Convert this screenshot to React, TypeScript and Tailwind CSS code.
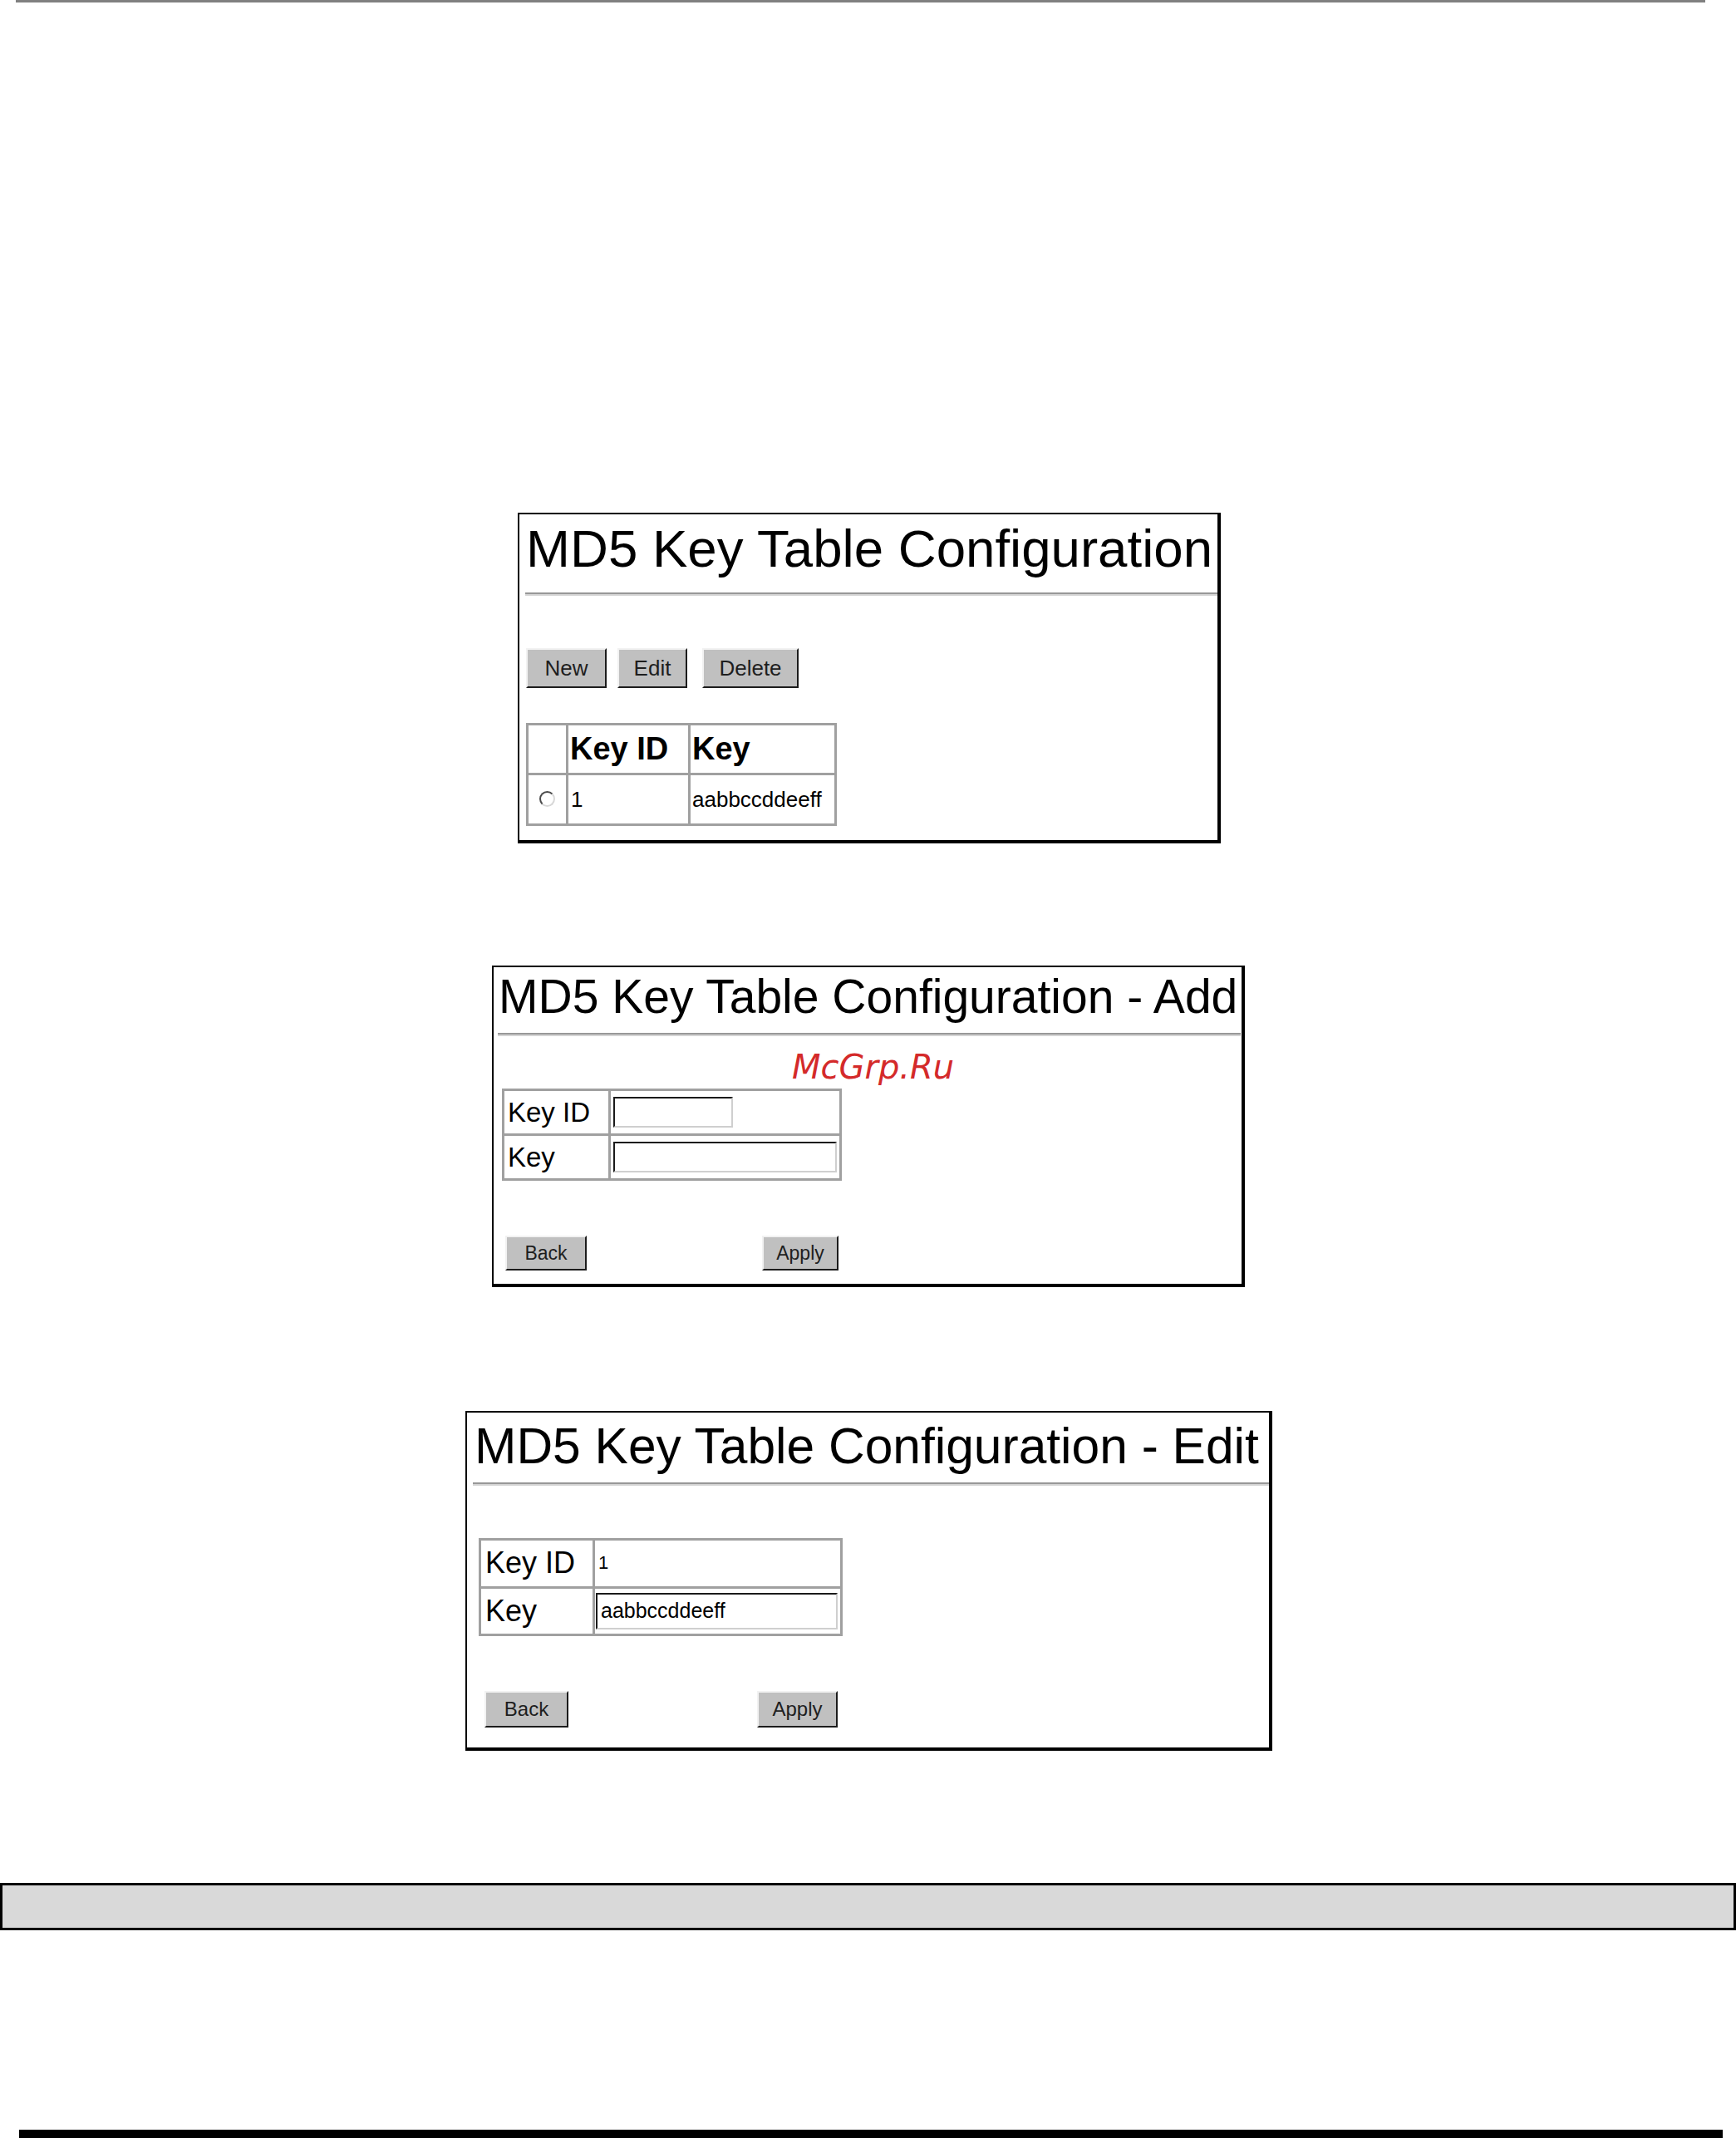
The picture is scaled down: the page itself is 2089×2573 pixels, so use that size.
import React from "react";

const btn1 =
  "flex items-center justify-center bg-[#c0c0c0] border-2 border-t-[#f2f2f2] border-l-[#f2f2f2] border-r-[#1c1c1c] border-b-[#1c1c1c] text-[#1e1e1e] leading-none";

function Radio() {
  return (
    <span className="block w-[19px] h-[19px] rounded-full bg-white border-2 border-t-[#4a4a4a] border-l-[#4a4a4a] border-r-[#d8d8d8] border-b-[#d8d8d8]" />
  );
}

function Hr({ ml, mt, mr }: { ml: string; mt: string; mr: string }) {
  return (
    <div className={`${ml} ${mt} ${mr} h-[4px] border-t-2 border-t-[#989898] border-b-2 border-b-[#d4d4d4]`} />
  );
}

export default function App() {
  return (
    <div className="w-[2089px] h-[2573px] bg-white flex flex-col font-['Liberation_Sans',Arial,sans-serif] text-black overflow-hidden">
      {/* top rule */}
      <div className="ml-[19px] w-[2033px] h-[3px] bg-[#808080]" />

      {/* Panel 1 */}
      <div className="ml-[623px] mt-[614px] w-[846px] h-[398px] border-l-2 border-t-2 border-r-4 border-b-4 border-black flex flex-col">
        <div className="pl-[8px] pt-[9px] text-[63.6px] leading-none whitespace-nowrap">
          MD5 Key Table Configuration
        </div>
        <Hr ml="ml-[7px]" mt="mt-[21px]" mr="mr-0" />
        <div className="ml-[8px] mt-[63px] flex">
          <div className={`${btn1} w-[97px] h-[48px] text-[26px]`}>New</div>
          <div className={`${btn1} ml-[13px] w-[84px] h-[48px] text-[26px]`}>Edit</div>
          <div className={`${btn1} ml-[18px] w-[116px] h-[48px] text-[26px]`}>Delete</div>
        </div>
        <div className="ml-[8px] mt-[42px] w-[374px] bg-[#a0a0a0] p-[3px] grid grid-cols-[45px_144px_173px] grid-rows-[57px_58px] gap-[3px]">
          <div className="bg-white" />
          <div className="bg-white flex items-center pl-[2px] text-[38px] font-bold leading-none">Key ID</div>
          <div className="bg-white flex items-center pl-[2px] text-[38px] font-bold leading-none">Key</div>
          <div className="bg-white flex items-center justify-center">
            <Radio />
          </div>
          <div className="bg-white flex items-center pl-[3px] text-[26px] leading-none">1</div>
          <div className="bg-white flex items-center pl-[2px] text-[26px] leading-none">aabbccddeeff</div>
        </div>
      </div>

      {/* Panel 2 */}
      <div className="relative ml-[592px] mt-[147px] w-[906px] h-[387px] border-l-2 border-t-2 border-r-4 border-b-4 border-black flex flex-col">
        <div className="pl-[6px] pt-[7px] text-[57px] leading-none whitespace-nowrap">
          MD5 Key Table Configuration - Add
        </div>
        <Hr ml="ml-[5px]" mt="mt-[15px]" mr="mr-[1px]" />
        <div className="absolute left-[359px] top-[100px] font-['DejaVu_Sans',sans-serif] italic text-[40px] leading-none text-[#d42a2a]">
          McGrp.Ru
        </div>
        <div className="ml-[10px] mt-[63px] w-[409px] bg-[#a0a0a0] p-[3px] grid grid-cols-[125px_275px] grid-rows-[51px_51px] gap-[3px]">
          <div className="bg-white flex items-center pl-[4px] text-[33px] leading-none">Key ID</div>
          <div className="bg-white flex items-center pl-[3px]">
            <input
              readOnly
              className="w-[144px] h-[37px] bg-white border-2 border-t-[#1a1a1a] border-l-[#1a1a1a] border-r-[#cfcfcf] border-b-[#cfcfcf] outline-none"
            />
          </div>
          <div className="bg-white flex items-center pl-[4px] text-[33px] leading-none">Key</div>
          <div className="bg-white flex items-center pl-[3px]">
            <input
              readOnly
              className="w-[269px] h-[37px] bg-white border-2 border-t-[#1a1a1a] border-l-[#1a1a1a] border-r-[#cfcfcf] border-b-[#cfcfcf] outline-none"
            />
          </div>
        </div>
        <div className="ml-[14px] mt-[66px] w-[401px] flex justify-between">
          <div className={`${btn1} w-[98px] h-[42px] text-[23px]`}>Back</div>
          <div className={`${btn1} w-[92px] h-[42px] text-[23px]`}>Apply</div>
        </div>
      </div>

      {/* Panel 3 */}
      <div className="ml-[560px] mt-[149px] w-[971px] h-[409px] border-l-2 border-t-2 border-r-4 border-b-4 border-black flex flex-col">
        <div className="pl-[9px] pt-[10px] text-[60.5px] leading-none whitespace-nowrap">
          MD5 Key Table Configuration - Edit
        </div>
        <Hr ml="ml-[7px]" mt="mt-[13px]" mr="mr-0" />
        <div className="ml-[14px] mt-[63px] w-[438px] bg-[#a0a0a0] p-[3px] grid grid-cols-[134px_295px] grid-rows-[55px_54px] gap-[3px]">
          <div className="bg-white flex items-center pl-[5px] text-[36px] leading-none">Key ID</div>
          <div className="bg-white flex items-center pl-[4px] text-[22px] leading-none">1</div>
          <div className="bg-white flex items-center pl-[5px] text-[36px] leading-none">Key</div>
          <div className="bg-white flex items-center pl-[1px]">
            <input
              readOnly
              value="aabbccddeeff"
              className="w-[291px] h-[44px] bg-white border-2 border-t-[#1a1a1a] border-l-[#1a1a1a] border-r-[#cfcfcf] border-b-[#cfcfcf] outline-none px-[4px] text-[25px] leading-none text-black font-['Liberation_Sans',Arial,sans-serif]"
            />
          </div>
        </div>
        <div className="ml-[21px] mt-[66px] w-[425px] flex justify-between">
          <div className={`${btn1} w-[101px] h-[44px] text-[24px]`}>Back</div>
          <div className={`${btn1} w-[97px] h-[44px] text-[24px]`}>Apply</div>
        </div>
      </div>

      {/* grey bar */}
      <div className="mt-[159px] w-[2089px] h-[57px] border-[3px] border-black bg-[#d9d9d9]" />

      {/* bottom rule */}
      <div className="ml-[23px] mt-[240px] w-[2050px] h-[10px] bg-black" />
    </div>
  );
}
